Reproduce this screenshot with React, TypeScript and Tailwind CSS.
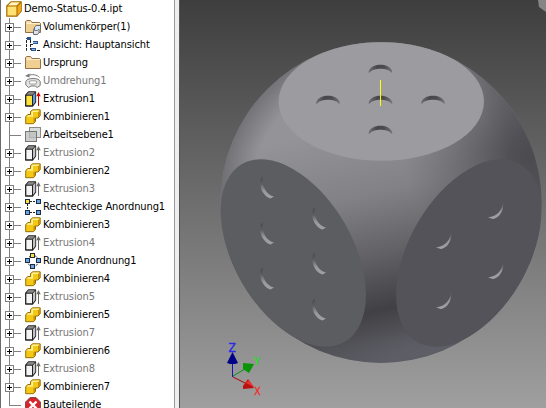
import React from "react";

type Kind = "bodies" | "view" | "folder" | "revolve" | "extrude" | "combine" | "plane" | "off" | "rect" | "round" | "end";

const rows: { kind: Kind; label: string; track: string }[] = [
  { kind: "bodies", label: "Volumenkörper(1)", track: "tracking-[-0.1px]" },
  { kind: "view", label: "Ansicht: Hauptansicht", track: "tracking-[-0.1px]" },
  { kind: "folder", label: "Ursprung", track: "tracking-[-0.1px]" },
  { kind: "revolve", label: "Umdrehung1", track: "tracking-[-0.1px]" },
  { kind: "extrude", label: "Extrusion1", track: "tracking-[-0.1px]" },
  { kind: "combine", label: "Kombinieren1", track: "tracking-[-0.1px]" },
  { kind: "plane", label: "Arbeitsebene1", track: "tracking-[-0.1px]" },
  { kind: "off", label: "Extrusion2", track: "tracking-[-0.1px]" },
  { kind: "combine", label: "Kombinieren2", track: "tracking-[-0.1px]" },
  { kind: "off", label: "Extrusion3", track: "tracking-[-0.1px]" },
  { kind: "rect", label: "Rechteckige Anordnung1", track: "tracking-[-0.1px]" },
  { kind: "combine", label: "Kombinieren3", track: "tracking-[-0.1px]" },
  { kind: "off", label: "Extrusion4", track: "tracking-[-0.1px]" },
  { kind: "round", label: "Runde Anordnung1", track: "tracking-[-0.1px]" },
  { kind: "combine", label: "Kombinieren4", track: "tracking-[-0.1px]" },
  { kind: "off", label: "Extrusion5", track: "tracking-[-0.1px]" },
  { kind: "combine", label: "Kombinieren5", track: "tracking-[-0.1px]" },
  { kind: "off", label: "Extrusion7", track: "tracking-[-0.1px]" },
  { kind: "combine", label: "Kombinieren6", track: "tracking-[-0.1px]" },
  { kind: "off", label: "Extrusion8", track: "tracking-[-0.1px]" },
  { kind: "combine", label: "Kombinieren7", track: "tracking-[-0.1px]" },
  { kind: "end", label: "Bauteilende", track: "tracking-[-0.1px]" },
];

function PartIcon() {
  return (
    <svg width="16" height="16" viewBox="0 0 16 16" className="shrink-0">
      <path d="M.8 5 5 .8h10.2v9.4L11 15.2H.8z" fill="#ffe271" stroke="#a86a00" strokeWidth="1.2" strokeLinejoin="round" />
      <path d="M11 5 15 1v9l-4 5z" fill="#f0a818" />
      <path d="M2 4.5 5.3 1.5h8.5L10.8 4.5z" fill="#fff6c4" />
      <path d="M.8 5H11v10M11 5l4-4" fill="none" stroke="#a86a00" strokeWidth="1.1" />
    </svg>
  );
}

function Folder() {
  return (
    <>
      <path d="M.5 13.5v-11l1-1h4l1.5 2h7.5l1 1v9z" fill="#f0cf92" stroke="#957044" />
      <path d="M1.5 4.5h13" stroke="#fff0cf" />
      <path d="M2 3h4" stroke="#fff0cf" />
    </>
  );
}

function Box({ front, side, arrow }: { front: string; side: string; arrow: string }) {
  return (
    <>
      <path d="M.7 4.2 3.5 1h7v10L7.5 15H.7z" fill={front} stroke="#222" strokeWidth="1.3" strokeLinejoin="round" />
      <path d="M7.5 4.5 10.3 1.5v9.3L7.5 14.5z" fill={side} />
      <path d="M1 4.2 3.5 1.2h6.7L7.5 4.2z" fill="#8a8a8a" />
      <path d="M.7 4.2h6.8v10.6M7.5 4.2 10.5 1" stroke="#222" fill="none" strokeWidth="1" />
      <path d="M13.5 15V3" stroke={arrow} />
      <path d="M11.3 5.3 13.5 1l2.2 4.3z" fill={arrow} />
    </>
  );
}

const square = (x: number, y: number, fill: string) => (
  <rect key={`${x}-${y}`} x={x + 0.5} y={y + 0.5} width="4" height="4" fill={fill} stroke="#1c2c44" />
);

function Glyph({ kind }: { kind: Kind }) {
  switch (kind) {
    case "bodies":
      return (
        <>
          <Folder />
          <path d="M9.5 8.5 11 6.5h4.5v3.5L14 11.5v2l-1.5 2h-4v-4z" fill="#dde3ec" stroke="#56606e" strokeWidth=".9" />
          <path d="M9.5 8.5v3h3l1.5-1.5" stroke="#56606e" fill="none" strokeWidth=".8" />
        </>
      );
    case "view":
      return (
        <>
          <path d="M4 1.5H1.5v12H3M5.5 3v9.500H7M8 7.5H6M12 13.500h4" stroke="#222" fill="none" strokeDasharray="3 1" />
          <rect x="2" y="0" width="4" height="3" fill="#24558e" />
          <rect x="8" y="4" width="5" height="3" fill="#24558e" />
          <rect x="8" y="5" width="4" height="1" fill="#8fb7e6" />
          <rect x="6" y="11" width="5" height="3" fill="#24558e" />
          <rect x="7" y="12" width="3" height="1" fill="#8fb7e6" />
        </>
      );
    case "folder":
      return <Folder />;
    case "revolve":
      return (
        <>
          <path d="M.8 8.500C1.500 6.500 4 5.500 8 5.500s6.500 1 7.200 3v4l-3 2-2-1.500H6L3.500 14.500.8 12z" fill="#e4e4e4" stroke="#777" />
          <path d="M4 8.500c2-1 6-1 8 0l-1 2.500H5z" fill="#fff" stroke="#888" strokeWidth=".8" />
          <path d="M14.500 4.500C12 1.500 7 1 3 2.500" stroke="#777" fill="none" />
          <path d="M0 3 4.500.5v4z" fill="#777" />
        </>
      );
    case "extrude":
      return <Box front="#ffe23c" side="#5a9fe0" arrow="#d00000" />;
    case "off":
      return <Box front="#f4f4f4" side="#c4c4c4" arrow="#666" />;
    case "combine":
      return (
        <>
          <path d="M.7 7.500 3 5.500h2.500v-3L7.700.8h7.500v6L13 9h-2.500v3.500L8.500 14.700H.7z" fill="#f5c814" stroke="#94700c" strokeLinejoin="round" />
          <path d="M1.500 7.700 3.200 6.200H6.300V2.900L8 1.500h6.500L12.800 3H8v4.700z" fill="#fff09a" />
          <path d="M13 3.500l1.700-1.700v4.800L13 8.300zM8.500 9.500 10 8.500v3.800l-1.500 1.700z" fill="#c48f06" />
        </>
      );
    case "plane":
      return (
        <>
          <rect x="4.500" y=".5" width="11" height="10" fill="#d8dcda" stroke="#8a8a8a" />
          <rect x=".5" y="4.500" width="11" height="10" fill="#b9bdbb" fillOpacity=".75" stroke="#777" />
        </>
      );
    case "rect":
      return (
        <>
          <path d="M5 2.500h7M2.500 5v7M5 13.500h7" stroke="#222" strokeDasharray="2 1" />
          {square(0, 0, "#ffe23c")}
          {square(11, 0, "#6aa5e4")}
          {square(0, 11, "#6aa5e4")}
          {square(11, 11, "#6aa5e4")}
        </>
      );
    case "round":
      return (
        <>
          <circle cx="8" cy="8" r="5.500" fill="none" stroke="#222" strokeDasharray="2 1" />
          {square(5, 0, "#ffe23c")}
          {square(0, 5, "#6aa5e4")}
          {square(11, 5, "#6aa5e4")}
          {square(5, 11, "#6aa5e4")}
        </>
      );
    case "end":
      return (
        <>
          <path d="M5 .6h6L15.400 5v6L11 15.400H5L.6 11V5z" fill="#d8252c" stroke="#7c4444" />
          <path d="m4.500 4.500 7 7M11.500 4.500l-7 7" stroke="#fff" strokeWidth="2.400" />
        </>
      );
  }
}

function Branch({ kind }: { kind: Kind }) {
  const leaf = kind === "plane" || kind === "end";
  return (
    <svg width="25" height="18" viewBox="0 0 25 18" className="shrink-0" shapeRendering="crispEdges">
      <path d={kind === "end" ? "M9.500 0v10" : "M9.500 0v18"} stroke="#808080" />
      <path d="M9 9.500h12" stroke="#808080" />
      {!leaf && (
        <>
          <rect x="5.500" y="5.500" width="8" height="8" fill="#fff" stroke="#808080" />
          <path d="M7 9.500h5M9.500 7v5" stroke="#000" />
        </>
      )}
    </svg>
  );
}

function Tree() {
  return (
    <div className="flex w-[174px] shrink-0 flex-col overflow-hidden border-l border-[#6b6b6b] bg-white">
      <div className="-ml-px flex h-[18px] shrink-0 items-center pl-1.5">
        <PartIcon />
        <span className="ml-0.5 whitespace-nowrap tracking-[-0.1px]">Demo-Status-0.4.ipt</span>
      </div>
      {rows.map((r) => (
        <div key={r.label} className="-ml-px flex h-[18px] shrink-0 items-center">
          <Branch kind={r.kind} />
          <svg width="16" height="16" viewBox="0 0 16 16" className="shrink-0">
            <Glyph kind={r.kind} />
          </svg>
          <span className={`ml-0.5 whitespace-nowrap ${r.track} ${r.kind === "off" || r.kind === "revolve" ? "text-[#777]" : "text-black"}`}>
            {r.label}
          </span>
        </div>
      ))}
    </div>
  );
}

const topPips = [[380.5, 69], [328, 100], [380.5, 100], [433, 100], [380.5, 130]];
const leftPips = [[259, 176], [259, 222], [259, 267], [311, 207], [311, 252], [311, 298]];
const rightPips = [[503, 197], [451, 227], [503, 257], [451, 287]];

function Viewport() {
  return (
    <svg className="min-w-0 flex-1" height="408" viewBox="180 0 366 408">
      <defs>
        <linearGradient id="bg" x2="0" y2="1">
          <stop stopColor="#3e3e3e" />
          <stop offset="1" stopColor="#9f9f9f" />
        </linearGradient>
        <linearGradient id="ball" gradientUnits="userSpaceOnUse" x1="330" y1="130" x2="385" y2="363">
          <stop stopColor="#949498" />
          <stop offset=".3" stopColor="#828286" />
          <stop offset=".55" stopColor="#626266" />
          <stop offset=".78" stopColor="#414145" />
          <stop offset=".88" stopColor="#505056" />
          <stop offset="1" stopColor="#696974" />
        </linearGradient>
        <radialGradient id="dark" gradientUnits="userSpaceOnUse" cx="535" cy="155" r="130">
          <stop stopColor="#45454a" />
          <stop offset=".2" stopColor="#4b4b50" stopOpacity=".9" />
          <stop offset="1" stopColor="#606064" stopOpacity="0" />
        </radialGradient>
        <radialGradient id="rim" gradientUnits="userSpaceOnUse" cx="381" cy="202.400" r="161">
          <stop offset=".82" stopColor="#505056" stopOpacity="0" />
          <stop offset="1" stopColor="#505056" stopOpacity=".5" />
        </radialGradient>
        <linearGradient id="tp" x2="1">
          <stop stopColor="#707074" />
          <stop offset=".35" stopColor="#48484c" />
          <stop offset=".65" stopColor="#4c4c50" />
          <stop offset="1" stopColor="#77777b" />
        </linearGradient>
        <linearGradient id="sp" x2="0" y2="1">
          <stop stopColor="#434347" />
          <stop offset=".35" stopColor="#606064" />
          <stop offset=".65" stopColor="#98989c" />
          <stop offset="1" stopColor="#a2a2a6" />
        </linearGradient>
      </defs>
      <rect x="180" width="366" height="408" fill="url(#bg)" />
      <path d="M538 0h8v12l-7-5z" fill="#858585" />
      <circle cx="381" cy="202.400" r="160.500" fill="url(#ball)" />
      <circle cx="381" cy="202.400" r="160.500" fill="url(#dark)" />
      <circle cx="381" cy="202.400" r="160.500" fill="url(#rim)" />
      <ellipse cx="381.300" cy="101.500" rx="102.700" ry="59.300" fill="#9c9ba0" />
      <ellipse cx="293.300" cy="253" rx="102.700" ry="59.300" transform="rotate(60 293.300 253)" fill="#5c5d61" />
      <ellipse cx="468.700" cy="253" rx="102.700" ry="59.300" transform="rotate(-60 468.700 253)" fill="#545359" />
      {topPips.map(([x, y]) => (
        <path key={`${x}${y}`} transform={`translate(${x} ${y})`} d="M-12 3.500C-11-7 11-7 12 3.500L10.500 3.500C8-1.500-8-1.500-10.500 3.500z" fill="url(#tp)" />
      ))}
      {leftPips.map(([x, y]) => (
        <path key={`${x}${y}`} transform={`translate(${x} ${y})`} d="M3.500 .5C-1 4 1 19 11.500 22.500L15 20.500C8 19 3 12 3.500 .5z" fill="url(#sp)" />
      ))}
      {rightPips.map(([x, y]) => (
        <path key={`${x}${y}`} transform={`translate(${x} ${y})`} d="M-3 0C3 4-1 19-15 20.500L-10 22C1 20 3 3-3 0z" fill="url(#sp)" />
      ))}
      <path d="M380.500 80v26" stroke="#ff0" />
      <path d="M232.500 377v-15" stroke="#1515bd" />
      <path d="m233 376 12-7" stroke="#079407" />
      <path d="m233 377 12 6" stroke="#b40000" />
      <path d="m227 363 5.500-11 5.500 11-3 1h-5z" fill="#000088" />
      <path d="m243 363 11 1-5 9-6-4z" fill="#079407" />
      <path d="m243 386 5-7 6 9-11 1z" fill="#ba1010" />
      <path d="m246 383 3-3 5 7z" fill="#ef3030" />
      <text x="228.500" y="351.500" fontSize="12" fill="#2929e8" stroke="#2929e8" strokeWidth=".3">Z</text>
      <text x="254" y="365" fontSize="11" fill="#22df22" stroke="#22df22" strokeWidth=".3">Y</text>
      <text x="254" y="395" fontSize="11" fill="#ee3030" stroke="#ee3030" strokeWidth=".3">X</text>
    </svg>
  );
}

export default function App() {
  return (
    <div className="flex h-[408px] w-[546px] overflow-hidden bg-[#555] font-['DejaVu_Sans_Condensed','DejaVu_Sans',sans-serif] text-[11px] leading-[18px]">
      <Tree />
      <div className="w-1.5 shrink-0 border-x border-l-[#999] border-r-[#555] bg-[#eee]" />
      <Viewport />
    </div>
  );
}
